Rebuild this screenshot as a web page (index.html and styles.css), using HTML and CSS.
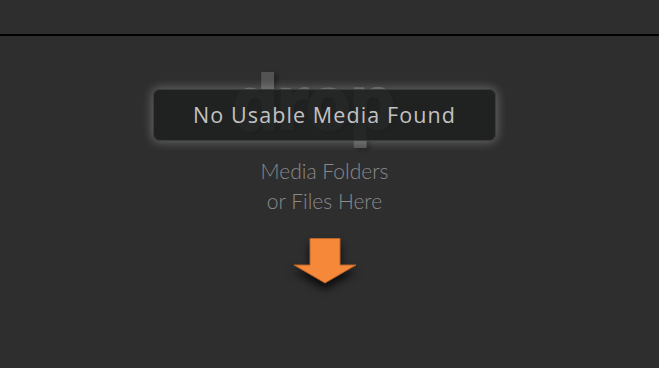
FILE: index.html
```html
<!DOCTYPE html>
<html>
<head>
<meta charset="utf-8">
<link rel="stylesheet" href="styles.css">
</head>
<body>
<div class="topbar"></div>
<main class="stage">
  <div class="notice-wrap">
    <div class="drop-word">drop</div>
    <div class="notice">No Usable Media Found</div>
  </div>
  <div class="hint">Media Folders<br>or Files Here</div>
  <svg class="arrow" width="62" height="46" viewBox="0 0 62 46">
    <polygon points="16,0.5 46,0.5 46,27 62,27 31,45 0,27 16,27" fill="#f6883a" stroke="#b8652c" stroke-width="1"/>
  </svg>
</main>
</body>
</html>
```
FILE: styles.css
```css
html, body {
  margin: 0;
  padding: 0;
  background: #2e2e2e;
  width: 659px;
  height: 368px;
  overflow: hidden;
}
.topbar {
  height: 34px;
  border-bottom: 2px solid #000;
}
.stage {
  width: 649px;
  display: flex;
  flex-direction: column;
  align-items: center;
  padding-top: 53px;
}
.notice-wrap {
  position: relative;
  width: 343px;
  height: 52px;
}
.drop-word {
  position: absolute;
  left: 78px;
  top: -26px;
  font-family: "Noto Sans", sans-serif;
  font-weight: 800;
  font-size: 76px;
  letter-spacing: -4px;
  line-height: 1;
  color: #525252;
  text-shadow: 3px 2px 4px rgba(0,0,0,0.35);
}
.notice {
  position: absolute;
  inset: 0;
  box-sizing: border-box;
  display: flex;
  align-items: center;
  justify-content: center;
  background: rgba(30, 31, 32, 0.86);
  border: 1px solid #3c3c3c;
  border-radius: 7px;
  box-shadow: 0 0 10px 2px rgba(255,255,255,0.24);
  font-family: "Open Sans", sans-serif;
  font-size: 21.5px;
  letter-spacing: 1.1px;
  color: #c2c2c2;
  padding-bottom: 2px;
}
.hint {
  margin-top: 15px;
  font-family: "Lato", sans-serif;
  font-weight: 300;
  font-size: 21px;
  line-height: 30px;
  color: #8a8a8a;
  text-align: center;
}
.arrow {
  display: block;
  margin-top: 22px;
  filter: drop-shadow(0 6px 4px rgba(0,0,0,0.75));
}
```
